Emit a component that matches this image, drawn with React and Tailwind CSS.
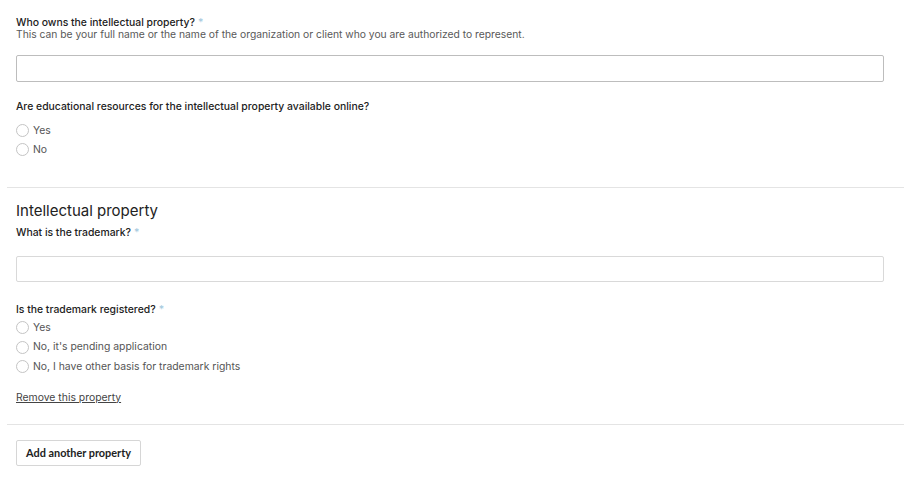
const font = { fontFamily: "Inter, 'Noto Sans', sans-serif" };

const Radio = ({ label, tall }) => (
  <label className={`flex items-center gap-[4px] text-[10.4px] text-[#555] ${tall ? 'h-[19.5px]' : 'h-[19px]'}`}>
    <span className="w-[13px] h-[13px] rounded-full border border-[#c4c4c4] bg-white shrink-0"></span>
    <span>{label}</span>
  </label>
);

const Label = ({ children, required }) => (
  <div className="text-[10.4px] font-medium text-[#222] leading-[11px]">
    {children}
    {required && <span className="text-[#a7cbe0] ml-[3px]">*</span>}
  </div>
);

export default function App() {
  return (
    <div className="w-[919px] h-[482px] bg-white overflow-hidden" style={font}>
      <div className="pl-[16px] pr-[35px] pt-[17px]">
        <Label required>Who owns the intellectual property?</Label>
        <div className="mt-[1px] text-[10.3px] text-[#595959] leading-[11px]">
          This can be your full name or the name of the organization or client who you are authorized to represent.
        </div>
        <div className="mt-[15px] h-[27px] border border-[#bdbdbd] rounded-[2px] bg-white"></div>
        <div className="mt-[19px]">
          <Label>Are educational resources for the intellectual property available online?</Label>
        </div>
        <div className="mt-[9px] flex flex-col">
          <Radio label="Yes" />
          <Radio label="No" />
        </div>
      </div>

      <div className="mt-[28px] ml-[7px] mr-[15px] border-t border-[#e4e4e4]"></div>

      <div className="pl-[16px] pr-[35px] pt-[14px]">
        <div className="text-[15px] text-[#222] leading-[18px]">Intellectual property</div>
        <div className="mt-[7px]">
          <Label required>What is the trademark?</Label>
        </div>
        <div className="mt-[18px] h-[26px] border border-[#d9d9d9] rounded-[2px] bg-white"></div>
        <div className="mt-[22px]">
          <Label required>Is the trademark registered?</Label>
        </div>
        <div className="mt-[3px] flex flex-col">
          <Radio tall label="Yes" />
          <Radio tall label="No, it's pending application" />
          <Radio tall label="No, I have other basis for trademark rights" />
        </div>
        <div className="mt-[15px] text-[10.4px] text-[#444] underline leading-[11px]">Remove this property</div>
      </div>

      <div className="mt-[21px] ml-[7px] mr-[15px] border-t border-[#e4e4e4]"></div>

      <div className="pl-[16px] pt-[14px]">
        <button
          className="h-[26px] px-[9px] border border-[#d6d6d6] rounded-[2px] bg-white text-[10.9px] text-[#222] font-bold"
          style={{ fontFamily: "Lato, 'Open Sans', sans-serif" }}
        >
          Add another property
        </button>
      </div>
    </div>
  );
}
